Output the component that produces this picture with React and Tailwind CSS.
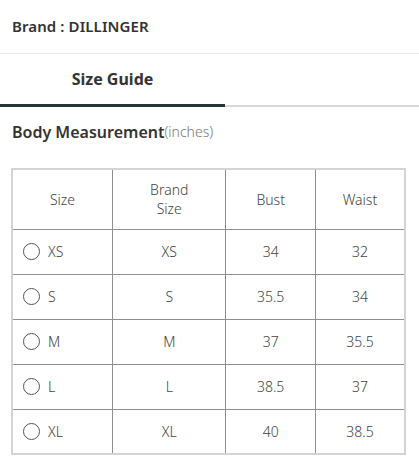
import React from "react";

const rows = [
  { size: "XS", brand: "XS", bust: "34", waist: "32" },
  { size: "S", brand: "S", bust: "35.5", waist: "34" },
  { size: "M", brand: "M", bust: "37", waist: "35.5" },
  { size: "L", brand: "L", bust: "38.5", waist: "37" },
  { size: "XL", brand: "XL", bust: "40", waist: "38.5" },
];

const cell = "border border-[#8e8e8e] text-center align-middle";

export default function App() {
  return (
    <div className="w-[419px] h-[475px] bg-white text-[#333] font-['Noto_Sans',sans-serif] overflow-hidden">
      <div className="h-[54px] flex items-center px-3 border-b border-[#e6e6e6]">
        <span className="text-[15px] font-semibold tracking-[0.1px]">Brand : DILLINGER</span>
      </div>

      <div className="flex items-end h-[53px]">
        <div className="w-[225px] h-full flex items-center justify-center border-b-[3px] border-[#28343a]">
          <span className="text-[16px] font-bold">Size Guide</span>
        </div>
        <div className="flex-1 border-b-2 border-[#d9d9d9]" />
      </div>

      <div className="h-[61px] flex items-start px-3 pt-[13px]">
        <span className="text-[16px] font-semibold">Body Measurement</span>
        <span className="text-[14px] text-[#777] font-light mt-[1px]">(inches)</span>
      </div>

      <table className="ml-[11px] w-[395px] border-collapse border-2 border-[#d4d4d4] text-[14px] text-[#444] font-light">
        <colgroup>
          <col className="w-[101px]" />
          <col className="w-[114px]" />
          <col className="w-[90px]" />
          <col className="w-[90px]" />
        </colgroup>
        <thead>
          <tr className="h-[60px]">
            <th className={`${cell} font-light`}>Size</th>
            <th className={`${cell} font-light leading-[19px]`}>
              Brand
              <br />
              Size
            </th>
            <th className={`${cell} font-light`}>Bust</th>
            <th className={`${cell} font-light`}>Waist</th>
          </tr>
        </thead>
        <tbody>
          {rows.map((r) => (
            <tr key={r.size} className="h-[45px]">
              <td className={`${cell} text-left`}>
                <div className="flex items-center pl-[10px] gap-[8px]">
                  <span className="w-[17px] h-[17px] rounded-full border border-[#555] inline-block" />
                  <span>{r.size}</span>
                </div>
              </td>
              <td className={cell}>{r.brand}</td>
              <td className={cell}>{r.bust}</td>
              <td className={cell}>{r.waist}</td>
            </tr>
          ))}
        </tbody>
      </table>
    </div>
  );
}
